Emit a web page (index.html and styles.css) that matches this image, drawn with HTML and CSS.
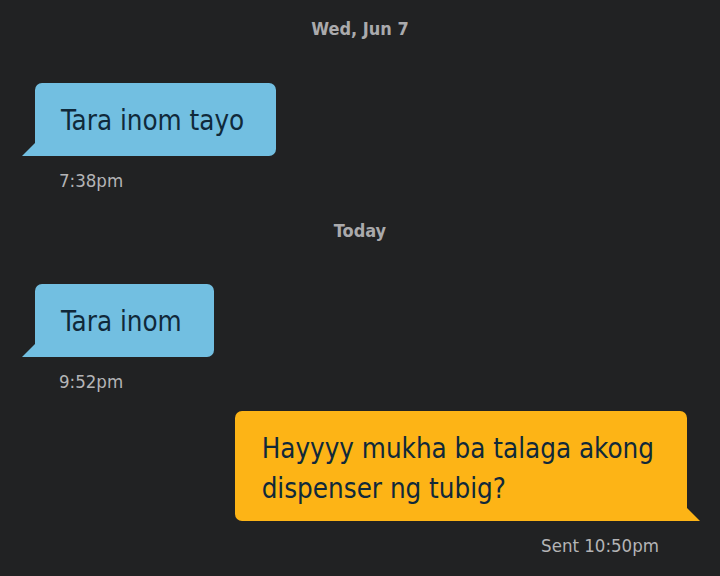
FILE: index.html
```html
<!DOCTYPE html>
<html lang="en">
<head>
  <meta charset="UTF-8" />
  <meta name="viewport" content="width=device-width, initial-scale=1.0"/>
  <title>Chat</title>
  <link rel="stylesheet" href="styles.css">
</head>
<body>
  <div id="chat">
    <div class="day">Wed, Jun 7</div>

    <div class="msg in first">
      <div class="bubble">Tara inom tayo</div>
      <div class="time">7:38pm</div>
    </div>

    <div class="day">Today</div>

    <div class="msg in">
      <div class="bubble">Tara inom</div>
      <div class="time">9:52pm</div>
    </div>

    <div class="msg out">
      <div class="bubble">Hayyyy mukha ba talaga akong<br>dispenser ng tubig?</div>
      <div class="time">Sent 10:50pm</div>
    </div>
  </div>
</body>
</html>
```

FILE: styles.css
```css
* {
  box-sizing: border-box;
}

html, body {
  margin: 0;
  padding: 0;
  background: #212223;
  font-family: 'DejaVu Sans Condensed', 'DejaVu Sans', sans-serif;
  width: 100%;
  height: 100%;
  overflow: hidden;
}

#chat {
  display: flex;
  flex-direction: column;
  padding: 19px 33px 0 35px;
}

.day {
  text-align: center;
  font-size: 18px;
  line-height: 20px;
  font-weight: 700;
  color: #aaaaac;
  margin-left: -2px;
}

.msg {
  display: flex;
  flex-direction: column;
  margin-top: 43px;
}

.msg.first {
  margin-top: 44px;
}

.msg.in {
  align-items: flex-start;
  margin-bottom: 30px;
}

.msg.out {
  align-items: flex-end;
  margin-top: -11px;
}

.bubble {
  position: relative;
  padding: 17px 32px 16px 26px;
  font-size: 27.5px;
  line-height: 40px;
  color: #10293a;
  border-radius: 7px;
}

.in .bubble {
  background: #72bfe1;
  border-bottom-left-radius: 0;
}

.out .bubble {
  background: #fdb416;
  border-bottom-right-radius: 0;
  padding: 17px 33px 13px 27px;
}

/* tail */
.in .bubble::after {
  content: "";
  position: absolute;
  left: -13px;
  bottom: 0;
  border-bottom: 13px solid #72bfe1;
  border-left: 13px solid transparent;
}

.out .bubble::after {
  content: "";
  position: absolute;
  right: -13px;
  bottom: 0;
  border-bottom: 13px solid #fdb416;
  border-right: 13px solid transparent;
}

.time {
  margin-top: 15px;
  font-size: 18.5px;
  line-height: 20px;
  color: #b4b4b6;
}

.in .time {
  margin-left: 24px;
}

.out .time {
  margin-right: 28px;
}
```
